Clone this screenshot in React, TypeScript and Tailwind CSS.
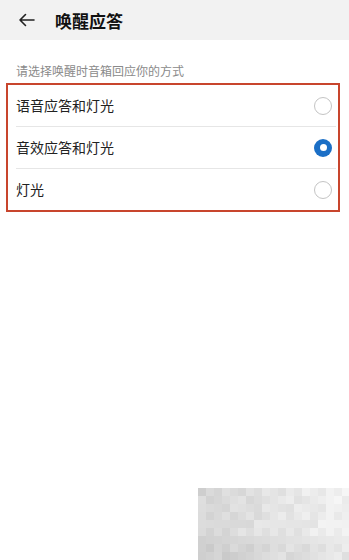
import React from "react";

const options = ["语音应答和灯光", "音效应答和灯光", "灯光"];
const selected = 1;

// blurred mosaic patch at the bottom right of the capture
const mosaic = Array.from({ length: 9 * 19 }, (_, i) => {
  const r = Math.floor(i / 19);
  const c = i % 19;
  const noise = ((c * 37 + r * 91 + c * r * 13) % 23) - 11;
  const base = 214 + c * 1.5 - (r > 5 ? 10 : 0) + noise * 0.7;
  const v = Math.max(192, Math.min(246, Math.round(base)));
  return `rgb(${v},${v},${v})`;
});

const Radio = ({ on }: { on: boolean }) =>
  on ? (
    <span className="w-[18px] h-[18px] rounded-full bg-[#1b6fc6] flex items-center justify-center">
      <span className="w-[7px] h-[7px] rounded-full bg-white" />
    </span>
  ) : (
    <span className="w-[18px] h-[18px] rounded-full border-[1.5px] border-[#c4c4c4] bg-white" />
  );

export default function App() {
  return (
    <div className="w-[349px] h-[560px] bg-white flex flex-col font-['Noto_Sans_CJK_SC','Noto_Sans',sans-serif] overflow-hidden">
      <div className="h-[40px] bg-[#f2f2f2] flex items-center pl-[18px] shrink-0">
        <svg width="17" height="14" viewBox="0 0 17 14" fill="none" stroke="#222" strokeWidth="1.6" strokeLinecap="round" strokeLinejoin="round">
          <path d="M16 7H2M7.5 1.5L2 7l5.5 5.5" />
        </svg>
        <span className="ml-[20px] text-[17px] font-bold text-[#111] leading-none">唤醒应答</span>
      </div>

      <div className="pl-[16px] pt-[22px] text-[12px] text-[#8a8a8a] leading-[18px]">请选择唤醒时音箱回应你的方式</div>

      <div className="mt-[3px] mx-[6px] w-[334px] border-[2.5px] border-[#c8452d] bg-white">
        {options.map((label, i) => (
          <div key={label} className="flex flex-col">
            <div className="h-[41px] flex items-center justify-between pl-[8px] pr-[6px]">
              <span className="text-[14px] text-[#222]">{label}</span>
              <Radio on={i === selected} />
            </div>
            {i < options.length - 1 && <div className="ml-[8px] mr-[2px] h-px bg-[#e6e6e6]" />}
          </div>
        ))}
      </div>

      <div className="flex-1" />

      <div className="self-end w-[151px] h-[72px] grid grid-cols-[repeat(19,8px)] grid-rows-[repeat(9,8px)]">
        {mosaic.map((c, i) => (
          <div key={i} style={{ backgroundColor: c }} />
        ))}
      </div>
    </div>
  );
}
